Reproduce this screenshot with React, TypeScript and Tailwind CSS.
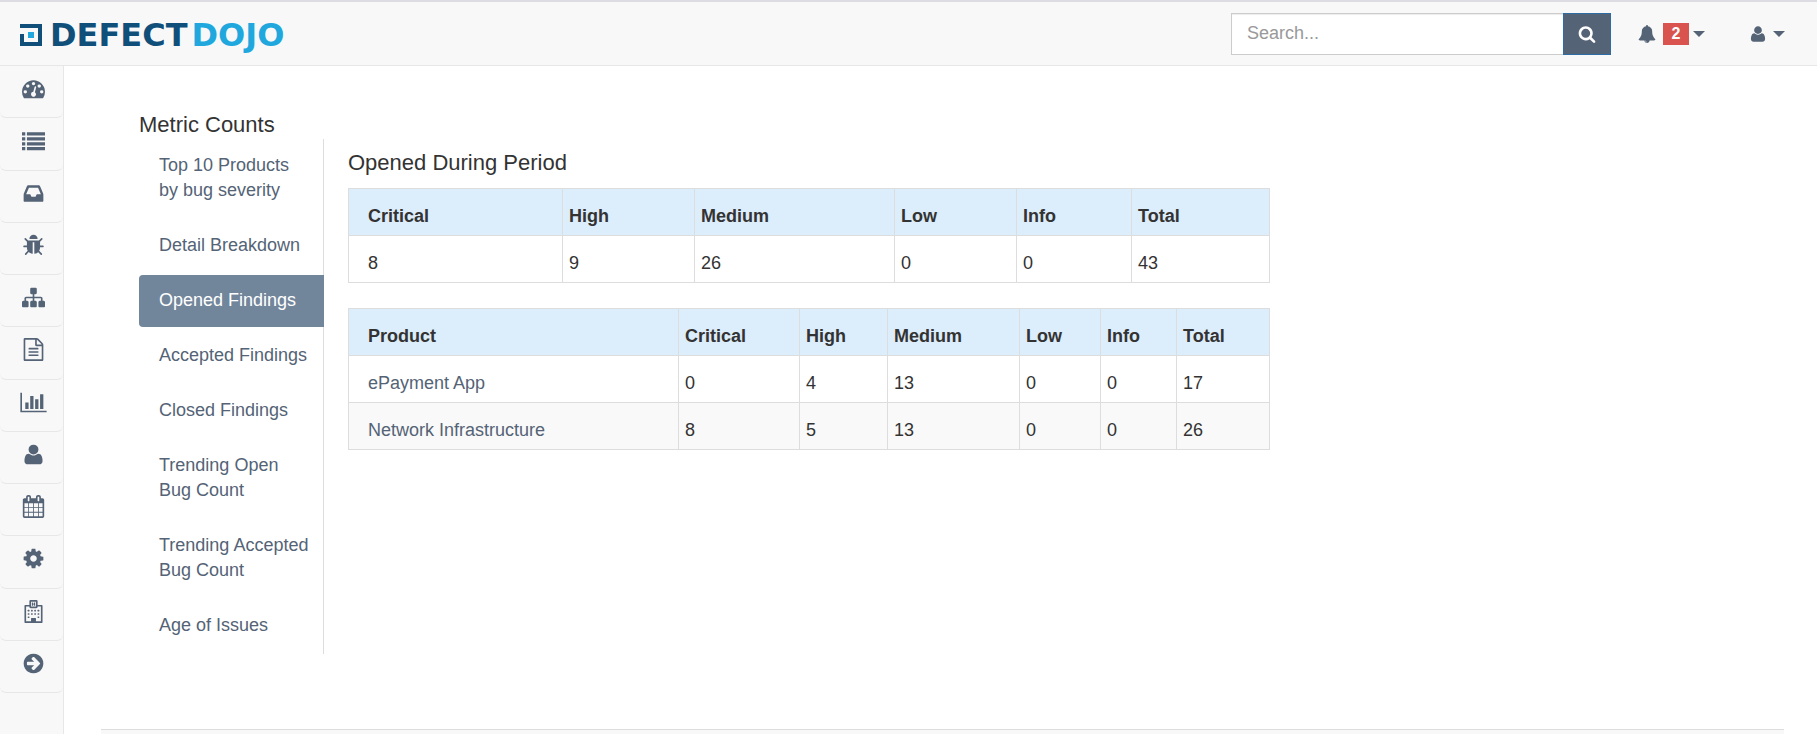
import type { ReactNode } from "react";

type IconProps = { className?: string };

function Glyph({ d, width = 1792, className }: IconProps & { d: string; width?: number }) {
  return (
    <svg viewBox={`0 0 ${width} 1792`} fill="currentColor" aria-hidden="true" className={className}>
      <path d={d} />
    </svg>
  );
}

const paths = {
  search:
    "M1216 832q0-185-131.5-316.5t-316.5-131.5-316.5 131.5-131.5 316.5 131.5 316.5 316.5 131.5 316.5-131.5 131.5-316.5zm512 832q0 52-38 90t-90 38q-54 0-90-38l-343-342q-179 124-399 124-143 0-273.5-55.5t-225-150-150-225-55.5-273.5 55.5-273.5 150-225 225-150 273.5-55.5 273.5 55.5 225 150 150 225 55.5 273.5q0 220-124 399l343 343q37 37 37 90z",
  tachometer:
    "M384 1152q0-53-37.5-90.5t-90.5-37.5-90.5 37.5-37.5 90.5 37.5 90.5 90.5 37.5 90.5-37.5 37.5-90.5zm192-448q0-53-37.5-90.5t-90.5-37.5-90.5 37.5-37.5 90.5 37.5 90.5 90.5 37.5 90.5-37.5 37.5-90.5zm428 481l101-382q6-26-7.5-48.5t-38.5-29.5-48 6.5-30 39.5l-101 382q-60 5-107 43.5t-63 98.5q-20 77 20 146t117 89 146-20 89-117q16-60-6-117t-72-91zm660-33q0-53-37.5-90.5t-90.5-37.5-90.5 37.5-37.5 90.5 37.5 90.5 90.5 37.5 90.5-37.5 37.5-90.5zm-640-640q0-53-37.5-90.5t-90.5-37.5-90.5 37.5-37.5 90.5 37.5 90.5 90.5 37.5 90.5-37.5 37.5-90.5zm448 192q0-53-37.5-90.5t-90.5-37.5-90.5 37.5-37.5 90.5 37.5 90.5 90.5 37.5 90.5-37.5 37.5-90.5zm320 448q0 261-141 483-19 29-54 29h-1402q-35 0-54-29-141-221-141-483 0-182 71-348t191-286 286-191 348-71 348 71 286 191 191 286 71 348z",
  list:
    "M0 256h256v256h-256zM0 640h256v256h-256zM0 1024h256v256h-256zM0 1408h256v256h-256zM384 256h1408v256h-1408zM384 640h1408v256h-1408zM384 1024h1408v256h-1408zM384 1408h1408v256h-1408z",
  inbox:
    "M1151 960h316q-1-3-2.5-8t-2.5-8l-212-496h-708l-212 496q-1 2-2.5 8t-2.5 8h316l95 192h320zm513 30v482q0 26-19 45t-45 19h-1408q-26 0-45-19t-19-45v-482q0-62 25-123l238-552q10-25 36.5-42t52.5-17h832q26 0 52.5 17t36.5 42l238 552q25 61 25 123z",
  bug:
    "M1696 960q0 26-19 45t-45 19h-224q0 171-67 290l208 209q19 19 19 45t-19 45q-18 19-45 19t-45-19l-198-197q-5 5-15 13t-42 28.5-65 36.5-82 29-97 13v-896h-128v896q-51 0-101.5-13.5t-87-33-66-39-43.5-32.5l-15-14-183 207q-20 21-48 21-24 0-43-16-19-18-20.5-44.5t15.5-46.5l202-227q-58-114-58-274h-224q-26 0-45-19t-19-45 19-45 45-19h224v-294l-173-173q-19-19-19-45t19-45 45-19 45 19l173 173h844l173-173q19-19 45-19t45 19 19 45-19 45l-173 173v294h224q26 0 45 19t19 45zm-480-576h-640q0-133 93.5-226.5t226.5-93.5 226.5 93.5 93.5 226.5z",
  sitemap:
    "M1792 1248v320q0 40-28 68t-68 28h-320q-40 0-68-28t-28-68v-320q0-40 28-68t68-28h96v-192h-512v192h96q40 0 68 28t28 68v320q0 40-28 68t-68 28h-320q-40 0-68-28t-28-68v-320q0-40 28-68t68-28h96v-192h-512v192h96q40 0 68 28t28 68v320q0 40-28 68t-68 28h-320q-40 0-68-28t-28-68v-320q0-40 28-68t68-28h96v-192q0-52 38-90t90-38h512v-192h-96q-40 0-68-28t-28-68v-320q0-40 28-68t68-28h320q40 0 68 28t28 68v320q0 40-28 68t-68 28h-96v192h512q52 0 90 38t38 90v192h96q40 0 68 28t28 68z",
  file:
    "M1596 380q28 28 48 76t20 88v1152q0 40-28 68t-68 28h-1344q-40 0-68-28t-28-68v-1600q0-40 28-68t68-28h896q40 0 88 20t76 48zm-444-244v376h376q-10-29-22-41l-313-313q-12-12-41-22zm384 1528v-1024h-416q-40 0-68-28t-28-68v-416h-768v1536h1280zm-1024-864q0-14 9-23t23-9h704q14 0 23 9t9 23v64q0 14-9 23t-23 9h-704q-14 0-23-9t-9-23v-64zm736 224q14 0 23 9t9 23v64q0 14-9 23t-23 9h-704q-14 0-23-9t-9-23v-64q0-14 9-23t23-9h704zm0 256q14 0 23 9t9 23v64q0 14-9 23t-23 9h-704q-14 0-23-9t-9-23v-64q0-14 9-23t23-9h704z",
  chart:
    "M640 896v512h-256v-512h256zm384-512v1024h-256v-1024h256zm1024 1152v128h-2048v-1536h128v1408h1920zm-640-896v768h-256v-768h256zm384-384v1152h-256v-1152h256z",
  user:
    "M1600 1405q0 120-73 189.5t-194 69.5h-874q-121 0-194-69.5t-73-189.5q0-53 3.5-103.5t14-109 26.5-108.5 43-97.5 62-81 85.5-53.5 111.5-20q9 0 42 21.5t74.5 48 108 48 133.5 21.5 133.5-21.5 108-48 74.5-48 42-21.5q61 0 111.5 20t85.5 53.5 62 81 43 97.5 26.5 108.5 14 109 3.5 103.5zm-320-893q0 159-112.5 271.5t-271.5 112.5-271.5-112.5-112.5-271.5 112.5-271.5 271.5-112.5 271.5 112.5 112.5 271.5z",
  calendar:
    "M192 1664h288v-288h-288v288zm352 0h320v-288h-320v288zm-352-352h288v-320h-288v320zm352 0h320v-320h-320v320zm-352-384h288v-288h-288v288zm736 736h320v-288h-320v288zm-384-736h320v-288h-320v288zm768 736h288v-288h-288v288zm-384-352h320v-320h-320v320zm-352-864v-288q0-13-9.5-22.5t-22.5-9.5h-64q-13 0-22.5 9.5t-9.5 22.5v288q0 13 9.5 22.5t22.5 9.5h64q13 0 22.5-9.5t9.5-22.5zm736 864h288v-320h-288v320zm-384-384h320v-288h-320v288zm384 0h288v-288h-288v288zm32-480v-288q0-13-9.5-22.5t-22.5-9.5h-64q-13 0-22.5 9.5t-9.5 22.5v288q0 13 9.5 22.5t22.5 9.5h64q13 0 22.5-9.5t9.5-22.5zm384-64v1280q0 52-38 90t-90 38h-1408q-52 0-90-38t-38-90v-1280q0-52 38-90t90-38h128v-96q0-66 47-113t113-47h64q66 0 113 47t47 113v96h384v-96q0-66 47-113t113-47h64q66 0 113 47t47 113v96h128q52 0 90 38t38 90z",
  cog:
    "M1152 896q0-106-75-181t-181-75-181 75-75 181 75 181 181 75 181-75 75-181zm512-109v222q0 12-8 23t-20 13l-185 28q-19 54-39 91 35 50 107 138 10 12 10 25t-9 23q-27 37-99 108t-94 71q-12 0-26-9l-138-108q-44 23-91 38-16 136-29 186-7 28-36 28h-222q-14 0-24.5-8.5t-11.5-21.5l-28-184q-49-16-90-37l-141 107q-10 9-25 9-14 0-25-11-126-114-165-168-7-10-7-23 0-12 8-23 15-21 51-66.5t54-70.5q-27-50-41-99l-183-27q-13-2-21-12.5t-8-23.5v-222q0-12 8-23t19-13l186-28q14-46 39-92-40-57-107-138-10-12-10-24 0-10 9-23 26-36 98.5-107.5t94.5-71.5q13 0 26 10l138 107q44-23 91-38 16-136 29-186 7-28 36-28h222q14 0 24.5 8.5t11.5 21.5l28 184q49 16 90 37l142-107q9-9 24-9 13 0 25 10 129 119 165 170 7 8 7 22 0 12-8 23-15 21-51 66.5t-54 70.5q26 50 41 98l183 28q13 2 21 12.5t8 23.5z",
  arrow:
    "M1413 896q0-27-18-45l-91-91-362-362q-18-18-45-18t-45 18l-91 91q-18 18-18 45t18 45l189 189h-502q-26 0-45 19t-19 45v128q0 26 19 45t45 19h502l-189 189q-19 19-19 45t19 45l91 91q18 18 45 18t45-18l362-362 91-91q18-18 18-45zm251 0q0 209-103 385.5t-279.5 279.5-385.5 103-385.5-103-279.5-279.5-103-385.5 103-385.5 279.5-279.5 385.5-103 385.5 103 279.5 279.5 103 385.5z",
  bell:
    "M912 1696q0-16-16-16-59 0-101.5-42.5t-42.5-101.5q0-16-16-16t-16 16q0 73 51.5 124.5t124.5 51.5q16 0 16-16zm816-288q0 52-38 90t-90 38h-448q0 106-75 181t-181 75-181-75-75-181h-448q-52 0-90-38t-38-90q50-42 91-88t85-119.5 74.5-158.5 50-206 19.5-260q0-152 117-282.5t307-158.5q-8-19-8-39 0-40 28-68t68-28 68 28 28 68q0 20-8 39 190 28 307 158.5t117 282.5q0 139 19.5 260t50 206 74.5 158.5 85 119.5 91 88z",
};

function HospitalIcon({ className }: IconProps) {
  const windows = [
    [448, 768], [704, 768], [960, 768], [1216, 768],
    [448, 1024], [704, 1024], [960, 1024], [1216, 1024],
    [448, 1280], [1216, 1280],
  ];
  return (
    <svg viewBox="0 0 1792 1792" fill="currentColor" aria-hidden="true" className={className}>
      <path
        fillRule="evenodd"
        d="M192 448q0-26 19-45t45-19h320v-288q0-40 28-68t68-28h448q40 0 68 28t28 68v288h320q26 0 45 19t19 45v1280q0 26-19 45t-45 19h-1280q-26 0-45-19t-19-45zM320 512v1152h384v-224q0-13 9.500-22.500t22.500-9.500h320q13 0 22.500 9.500t9.500 22.500v224h384v-1152h-256v32q0 40-28 68t-68 28h-448q-40 0-68-28t-28-68v-32zM704 128v384h384v-384zM768 192h96v96h64v-96h96v256h-96v-96h-64v96h-96z"
      />
      {windows.map(([x, y]) => (
        <rect key={`${x}-${y}`} x={x} y={y} width="128" height="128" rx="24" />
      ))}
    </svg>
  );
}

function Caret() {
  return (
    <svg viewBox="0 0 12 6" fill="currentColor" aria-hidden="true" className="h-1.5 w-3">
      <path d="M0 0h12l-6 6z" />
    </svg>
  );
}

function Logo() {
  return (
    <a href="#home" className="flex items-center gap-2 pt-[3px]">
      <svg viewBox="0 0 22 22" aria-hidden="true" className="size-[22px]">
        <path d="M0 2h20v18H2V10" fill="none" stroke="#0f4f7a" strokeWidth="4" />
        <rect x="8" y="8" width="6" height="6" fill="#20a8de" />
      </svg>
      <span className="flex gap-1 font-['DejaVu_Sans',sans-serif] text-[32px] leading-8 font-bold text-[#0f4f7a]">
        <span>DEFECT</span>
        <span className="text-[#20a8de]">DOJO</span>
      </span>
    </a>
  );
}

const icon = "h-[23px] w-[23px]";
const sideLinks: { label: string; icon: ReactNode }[] = [
  { label: "Dashboard", icon: <Glyph d={paths.tachometer} className={icon} /> },
  { label: "Products", icon: <Glyph d={paths.list} className={icon} /> },
  { label: "Engagements", icon: <Glyph d={paths.inbox} className={icon} /> },
  { label: "Findings", icon: <Glyph d={paths.bug} className={icon} /> },
  { label: "Endpoints", icon: <Glyph d={paths.sitemap} className={icon} /> },
  { label: "Reports", icon: <Glyph d={paths.file} className={icon} /> },
  { label: "Metrics", icon: <Glyph d={paths.chart} width={2048} className="h-[23px] w-[27px]" /> },
  { label: "Users", icon: <Glyph d={paths.user} className={icon} /> },
  { label: "Calendar", icon: <Glyph d={paths.calendar} className={icon} /> },
  { label: "Configuration", icon: <Glyph d={paths.cog} className={icon} /> },
  { label: "Benchmarks", icon: <HospitalIcon className={icon} /> },
  { label: "Expand menu", icon: <Glyph d={paths.arrow} className={icon} /> },
];

const tabs: string[][] = [
  ["Top 10 Products", "by bug severity"],
  ["Detail Breakdown"],
  ["Opened Findings"],
  ["Accepted Findings"],
  ["Closed Findings"],
  ["Trending Open", "Bug Count"],
  ["Trending Accepted", "Bug Count"],
  ["Age of Issues"],
];

type Column = { name: string; width: string };

const periodColumns: Column[] = [
  { name: "Critical", width: "w-[214px]" },
  { name: "High", width: "w-[132px]" },
  { name: "Medium", width: "w-[200px]" },
  { name: "Low", width: "w-[122px]" },
  { name: "Info", width: "w-[115px]" },
  { name: "Total", width: "w-[138px]" },
];

const productColumns: Column[] = [
  { name: "Product", width: "w-[330px]" },
  { name: "Critical", width: "w-[121px]" },
  { name: "High", width: "w-[88px]" },
  { name: "Medium", width: "w-[132px]" },
  { name: "Low", width: "w-[81px]" },
  { name: "Info", width: "w-[76px]" },
  { name: "Total", width: "w-[93px]" },
];

function CountTable({ columns, rows }: { columns: Column[]; rows: (string | number)[][] }) {
  const cell = "border border-[#ddd] pt-[15px] pr-1.5 pb-1.5 pl-1.5 first:pl-[19px]";
  return (
    <table className="w-full table-fixed border-collapse text-left">
      <thead>
        <tr className="bg-[#dcedfb]">
          {columns.map((c) => (
            <th key={c.name} scope="col" className={`${cell} ${c.width} font-bold`}>
              {c.name}
            </th>
          ))}
        </tr>
      </thead>
      <tbody>
        {rows.map((row, r) => (
          <tr key={r} className="even:bg-[#f9f9f9]">
            {row.map((value, i) => (
              <td key={i} className={cell}>
                {typeof value === "string" ? (
                  <a href="#product" className="text-[#546376]">
                    {value}
                  </a>
                ) : (
                  value
                )}
              </td>
            ))}
          </tr>
        ))}
      </tbody>
    </table>
  );
}

export default function App() {
  return (
    <div className="flex min-h-screen flex-col bg-white font-['Liberation_Sans',Arial,sans-serif] text-lg leading-[25px] text-[#333]">
      <header className="flex h-[66px] items-center justify-between border-t-2 border-b border-t-[#dcdce2] border-b-[#e7e7e7] bg-[#f8f8f8] pr-8 pl-5">
        <Logo />
        <div className="flex items-center text-[#546376]">
          <form role="search" className="flex h-[42px]">
            <input
              type="text"
              aria-label="Search"
              placeholder="Search..."
              className="w-[332px] border border-r-0 border-[#ccc] bg-white px-[15px] shadow-[inset_0_1px_1px_rgba(0,0,0,0.075)] outline-none placeholder:text-[#999]"
            />
            <button
              type="button"
              aria-label="Run search"
              className="flex w-12 items-center justify-center border border-[#2e6da4] bg-[#546376] text-white"
            >
              <Glyph d={paths.search} className="size-[18px]" />
            </button>
          </form>
          <button type="button" aria-label="Alerts" className="ml-[27px] flex items-center gap-1">
            <Glyph d={paths.bell} className="size-[18px]" />
            <span className="ml-[3px] flex h-[22px] w-[26px] items-center justify-center bg-[#d9534f] text-base font-bold text-white">
              2
            </span>
            <Caret />
          </button>
          <button type="button" aria-label="Account" className="ml-11 flex items-center gap-1.5">
            <Glyph d={paths.user} className="size-[18px]" />
            <Caret />
          </button>
        </div>
      </header>

      <div className="flex flex-1">
        <nav aria-label="Main" className="w-16 shrink-0 border-r border-[#e7e7e7] bg-[#f8f8f8]">
          <ul className="flex h-[627px] flex-col">
            {sideLinks.map((link) => (
              <li key={link.label} className="flex-1 rounded-b-md border-b border-[#e7e7e7]">
                <a
                  href="#menu"
                  aria-label={link.label}
                  className="flex justify-center pt-[11px] pl-1 text-[#546376]"
                >
                  {link.icon}
                </a>
              </li>
            ))}
          </ul>
        </nav>

        <main className="flex flex-1 flex-col pr-[33px] pl-[37px]">
          <div className="px-[38px] pt-[47px] pb-[75px]">
            <h1 className="mb-0.5 text-[22px] leading-6">Metric Counts</h1>
            <div className="flex gap-6">
              <ul className="w-[185px] shrink-0 border-r border-[#ddd]">
                {tabs.map((lines) => {
                  const active = lines[0] === "Opened Findings";
                  return (
                    <li key={lines[0]} className="-mr-px pt-px pb-0.5">
                      <a
                        href="#tab"
                        className={
                          active
                            ? "block rounded-l bg-[#72869b] py-[13px] pr-3 pb-3.5 pl-5 text-white"
                            : "block py-[13px] pr-3 pb-3.5 pl-5 text-[#546376]"
                        }
                      >
                        {lines.map((line) => (
                          <span key={line} className="block whitespace-nowrap">
                            {line}
                          </span>
                        ))}
                      </a>
                    </li>
                  );
                })}
              </ul>
              <section className="max-w-[922px] flex-1 pt-3">
                <h2 className="mb-[13px] text-[22px] leading-6">Opened During Period</h2>
                <div className="flex flex-col gap-[25px]">
                  <CountTable columns={periodColumns} rows={[[8, 9, 26, 0, 0, 43]]} />
                  <CountTable
                    columns={productColumns}
                    rows={[
                      ["ePayment App", 0, 4, 13, 0, 0, 17],
                      ["Network Infrastructure", 8, 5, 13, 0, 0, 26],
                    ]}
                  />
                </div>
              </section>
            </div>
          </div>
          <div className="flex-1 border-t border-[#ddd] bg-[#f8f8f8]" />
        </main>
      </div>
    </div>
  );
}
